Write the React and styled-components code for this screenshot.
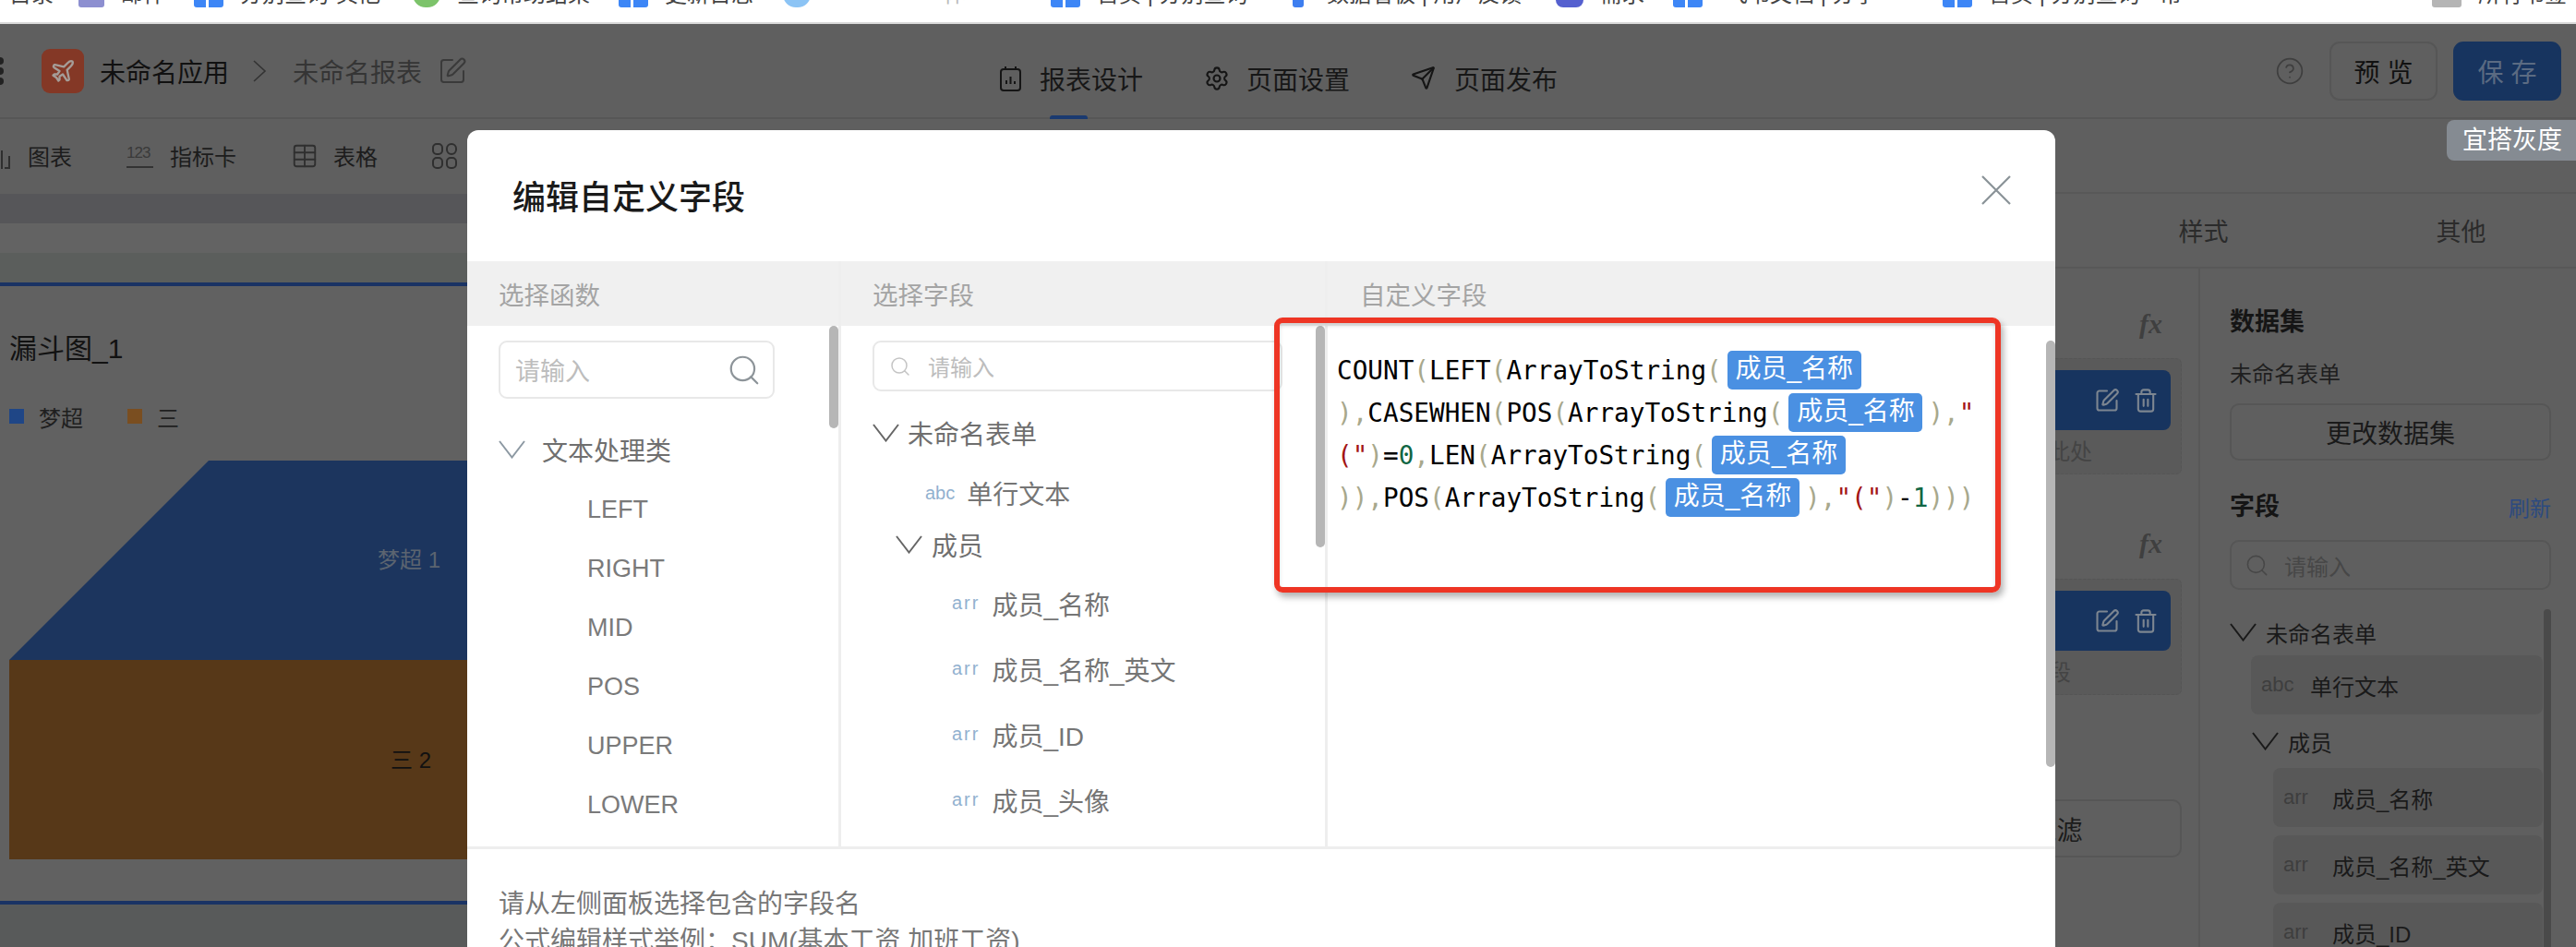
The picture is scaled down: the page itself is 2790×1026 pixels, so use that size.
import React from 'react';
import styled, { createGlobalStyle } from 'styled-components';
import { Plane, Settings, Send, SquarePen, Trash2, CircleHelp, Search, Table } from 'lucide-react';

const GlobalStyle = createGlobalStyle`
  html, body {
    margin: 0;
    padding: 0;
    background: #5f5f5f;
  }
  * {
    box-sizing: border-box;
  }
  body {
    font-family: "Liberation Sans", "Noto Sans CJK SC", sans-serif;
  }
`;

const Page = styled.div`
  position: relative;
  width: 2790px;
  height: 1026px;
  overflow: hidden;
  display: flex;
  flex-direction: column;
  background: #5f5f5f;
`;

/* bookmarks, cut off by the top of the photo */
const BookmarkBar = styled.div`
  height: 26px;
  flex: none;
  display: flex;
  background: #fff;
  border-bottom: 2px solid #d9d9d9;
  overflow: hidden;
`;

const Bookmark = styled.div`
  flex: none;
  width: ${p => p.$w}px;
  display: flex;
  gap: ${p => p.$gap || 18}px;
  height: 30px;
  margin-top: -21px;
  padding-left: ${p => p.$pad || 0}px;
  font-size: 24px;
  line-height: 29px;
  color: ${p => p.$faint ? '#bbb' : '#444'};
  white-space: nowrap;
  overflow: hidden;
`;

const Favicon = styled.span`
  flex: none;
  width: ${p => p.$w || 32}px;
  height: 29px;
  border-radius: 0 0 ${p => p.$round || 3}px ${p => p.$round || 3}px;
  background: ${p => p.$c};
  ${p => p.$split && 'background: linear-gradient(90deg, #3d86f6 0 40%, #fff 40% 50%, #3d86f6 50%);'}
`;

const Header = styled.div`
  height: 103px;
  flex: none;
  display: grid;
  grid-template-columns: 1083px auto 1fr;
  align-items: center;
  background: #5f5f5f;
  border-bottom: 2px solid #565656;
`;

const Brand = styled.div`
  display: flex;
  align-items: center;
  height: 100%;
`;

const Grip = styled.svg`
  width: 4px;
  height: 30px;
  fill: #222;
  margin: 0 41px 0 0;
`;

const Logo = styled.div`
  width: 46px;
  height: 48px;
  border-radius: 9px;
  background: #843826;
  color: #a59d98;
  display: flex;
  align-items: center;
  justify-content: center;
  margin-right: 17px;
`;

const AppName = styled.span`
  font-size: 28px;
  color: #111;
`;

const Crumb = styled.svg`
  width: 16px;
  height: 24px;
  margin: 0 28px 0 25px;
  fill: none;
  stroke: #333;
  stroke-width: 1.6;
`;

const ReportName = styled.span`
  font-size: 28px;
  color: #353535;
  margin-right: 17px;
`;

const EditIcon = styled(SquarePen)`
  color: ${p => p.$c || '#3a3a3a'};
`;

const HeadTabs = styled.div`
  display: flex;
  gap: 66px;
  height: 100%;
`;

const HeadTab = styled.div`
  position: relative;
  display: flex;
  align-items: center;
  gap: ${p => p.$gap || 20}px;
  font-size: 28px;
  color: #171717;
  padding-top: 16px;
  ${p => p.$active && `
    &::after {
      content: '';
      position: absolute;
      left: 54px;
      bottom: -2px;
      width: 41px;
      height: 4px;
      border-radius: 3px 3px 0 0;
      background: #1a3a70;
    }
  `}
`;

const HeadActions = styled.div`
  display: flex;
  align-items: center;
  justify-content: flex-end;
  padding-right: 16px;
`;

const HelpIcon = styled(CircleHelp)`
  color: #3f3f3f;
  margin-right: 27px;
`;

const ActionButton = styled.div`
  width: 117px;
  height: 64px;
  margin-left: ${p => p.$ml || 0}px;
  border-radius: 11px;
  display: flex;
  align-items: center;
  justify-content: center;
  font-size: 28px;
  white-space: pre;
  border: 2px solid ${p => p.$primary ? '#17345f' : '#565656'};
  background: ${p => p.$primary ? '#17345f' : 'transparent'};
  color: ${p => p.$primary ? '#5b6b82' : '#111'};
`;

const GrayTag = styled.div`
  position: absolute;
  right: 0;
  top: 130px;
  width: 140px;
  height: 44px;
  border-radius: 8px 0 0 8px;
  background: #858b92;
  color: #fff;
  font-size: 27px;
  line-height: 44px;
  padding-left: 17px;
  white-space: nowrap;
`;

const Body = styled.div`
  flex: 1;
  min-height: 0;
  display: flex;
`;

const Workspace = styled.div`
  width: 1968px;
  flex: none;
  display: flex;
  flex-direction: column;
`;

const Toolbar = styled.div`
  height: 81px;
  flex: none;
  display: flex;
  align-items: center;
  gap: 59px;
  padding-bottom: 2px;
`;

const ToolItem = styled.div`
  display: flex;
  align-items: center;
  gap: ${p => p.$gap || 18}px;
  font-size: 24px;
  color: #1c1c1c;
`;

const ToolSvg = styled.svg`
  width: ${p => p.$w}px;
  height: 28px;
  fill: none;
  stroke: #2f2f2f;
  stroke-width: 2;
`;

const NumberMark = styled.span`
  width: 29px;
  display: flex;
  flex-direction: column;
  font-size: 17px;
  line-height: 20px;
  color: #3a3a3a;
  border-bottom: 2px solid #333;
  padding-bottom: 4px;
  letter-spacing: -1px;
`;

const Band = styled.div`
  height: ${p => p.$h}px;
  flex: none;
  background: ${p => p.$bg};
`;

const Canvas = styled.div`
  flex: none;
  height: 666px;
  padding: 48px 0 0 10px;
  background: #616161;
`;

const ChartTitle = styled.div`
  font-size: 30px;
  line-height: 40px;
  color: #121212;
`;

const Legend = styled.div`
  display: flex;
  align-items: center;
  gap: 48px;
  margin-top: 40px;
  height: 26px;
`;

const LegendItem = styled.div`
  display: flex;
  align-items: center;
  gap: 16px;
  font-size: 24px;
  color: #1f1f1f;
`;

const Swatch = styled.span`
  width: 16px;
  height: 16px;
  background: ${p => p.$c};
`;

const Funnel = styled.svg`
  display: block;
  margin-top: 35px;
  width: 600px;
  height: 432px;
  font-size: 24px;
  text-anchor: middle;
`;

const Side = styled.div`
  flex: 1;
  min-width: 0;
  display: flex;
  flex-direction: column;
  padding-top: 79px;
`;

const SideTabs = styled.div`
  height: 83px;
  flex: none;
  display: grid;
  grid-template-columns: repeat(3, 279px);
  align-items: center;
  justify-items: center;
  border-top: 2px solid #585858;
  border-bottom: 2px solid #585858;
  font-size: 27px;
  color: #2b2b2b;
`;

const SideColumns = styled.div`
  flex: 1;
  min-height: 0;
  display: flex;
`;

const ConfigCol = styled.div`
  width: 415px;
  flex: none;
  padding: 46px 18px 0 22px;
  border-right: 2px solid #585858;
`;

const Fx = styled.div`
  font-family: "Liberation Serif", serif;
  font-style: italic;
  font-weight: 700;
  font-size: 30px;
  line-height: 27px;
  height: 27px;
  text-align: right;
  padding-right: 21px;
  margin: ${p => p.$mt || 0}px 0 ${p => p.$mb || 22}px;
  color: #3f3f3f;
`;

const DropBox = styled.div`
  height: 126px;
  padding: 12px 11px 0;
  background: #5a5a5a;
  border: 1px dashed #555;
  border-radius: 6px;
`;

const FieldChip = styled.div`
  height: 65px;
  border-radius: 8px;
  background: #17345f;
  display: flex;
  align-items: center;
  justify-content: flex-end;
  gap: 14px;
  padding-right: 13px;
  color: #7d8691;
`;

const DropHint = styled.div`
  margin-top: 9px;
  padding-right: ${p => p.$inset}px;
  text-align: right;
  font-size: 24px;
  line-height: 30px;
  color: #444;
  white-space: nowrap;
`;

const OutlineButton = styled.div`
  height: ${p => p.$h}px;
  margin-top: ${p => p.$mt || 0}px;
  padding-left: ${p => p.$padLeft || 0}px;
  border: 2px solid #565656;
  border-radius: 10px;
  display: flex;
  align-items: center;
  justify-content: center;
  font-size: 28px;
  color: #1a1a1a;
`;

const DataCol = styled.div`
  flex: 1;
  min-width: 0;
  padding: 40px 27px 0 32px;
`;

const SectionTitle = styled.div`
  font-size: 27px;
  line-height: 36px;
  font-weight: 700;
  color: #151515;
`;

const SourceName = styled.div`
  margin-top: 21px;
  font-size: 24px;
  line-height: 36px;
  color: #1f1f1f;
`;

const FieldHead = styled.div`
  display: flex;
  justify-content: space-between;
  align-items: center;
  margin-top: 32px;
  height: 36px;
`;

const RefreshLink = styled.span`
  font-size: 23px;
  color: #2c4a80;
`;

const SideSearch = styled.div`
  height: 54px;
  margin-top: 18px;
  border: 2px solid #565656;
  border-radius: 10px;
  display: flex;
  align-items: center;
  gap: 16px;
  padding-left: 14px;
  font-size: 24px;
  color: #474747;
`;

const SideTree = styled.div`
  position: relative;
  margin: 21px -27px 0 0;
  padding-right: 36px;
`;

const SideScroll = styled.div`
  position: absolute;
  top: 0;
  right: 27px;
  width: 8px;
  height: 400px;
  border-radius: 4px;
  background: #4a4a4a;
`;

const SideGroup = styled.div`
  display: flex;
  align-items: center;
  gap: 10px;
  height: ${p => p.$h}px;
  margin-left: ${p => p.$indent || 0}px;
  font-size: 24px;
  color: #1a1a1a;
`;

const SideRow = styled.div`
  display: flex;
  align-items: center;
  height: 64px;
  margin: 0 0 ${p => p.$mb || 0}px ${p => p.$indent}px;
  padding-left: 11px;
  border-radius: 8px;
  background: #585858;
  font-size: 24px;
  color: #1a1a1a;
`;

const SideType = styled.span`
  width: 53px;
  font-size: 22px;
  color: #3e3e3e;
`;

const Chevron = styled.svg`
  flex: none;
  width: ${p => p.$w || 29}px;
  height: 20px;
  fill: none;
  stroke: ${p => p.$c || '#1a1a1a'};
  stroke-width: 2;
`;

/* dialog */
const Modal = styled.div`
  position: absolute;
  left: 506px;
  top: 141px;
  width: 1720px;
  height: 960px;
  border-radius: 12px;
  background: #fff;
  overflow: hidden;
`;

const ModalHead = styled.div`
  height: 142px;
  display: flex;
  align-items: center;
  justify-content: space-between;
  padding: 0 48px 2px 49px;
  font-size: 36px;
  font-weight: 500;
  color: #1a1a1a;
`;

const CloseIcon = styled.svg`
  width: 32px;
  height: 32px;
  margin-top: -10px;
  fill: none;
  stroke: #8a9297;
  stroke-width: 2.2;
`;

const Columns = styled.div`
  display: grid;
  grid-template-columns: 405px 527px 1fr;
  height: 637px;
  border-bottom: 3px solid #eeeeee;
`;

const Column = styled.div`
  display: flex;
  flex-direction: column;
  min-width: 0;
  border-right: ${p => p.$last ? 0 : 3}px solid #eeeeee;
`;

const ColumnHead = styled.div`
  height: 70px;
  flex: none;
  display: flex;
  align-items: center;
  padding-left: ${p => p.$pad || 34}px;
  background: #f0f0f0;
  font-size: 27.5px;
  color: #a4a4a4;
`;

const ColumnBody = styled.div`
  position: relative;
  flex: 1;
  min-height: 0;
  overflow: hidden;
  padding: ${p => p.$flush ? '0' : '16px 0 0 34px'};
`;

const Thumb = styled.div`
  position: absolute;
  top: ${p => p.$top || 0}px;
  right: 0;
  width: 10px;
  height: ${p => p.$h}px;
  border-radius: 5px;
  background: #b6b6b6;
`;

const SearchBox = styled.div`
  width: ${p => p.$w}px;
  height: ${p => p.$h}px;
  display: flex;
  align-items: center;
  justify-content: ${p => p.$iconRight ? 'space-between' : 'flex-start'};
  gap: 18px;
  padding: 0 ${p => p.$iconRight ? 12 : 16}px 0 16px;
  border: 2px solid #e8e8e8;
  border-radius: 9px;
  color: #bdbdbd;
  font-size: ${p => p.$font}px;
`;

const Group = styled.div`
  display: flex;
  align-items: center;
  gap: ${p => p.$gap}px;
  height: ${p => p.$h}px;
  margin: ${p => p.$mt || 0}px 0 0 ${p => p.$indent || 0}px;
  font-size: 28px;
  color: #6f6f6f;
`;

const FuncItem = styled.div`
  height: 64px;
  line-height: 64px;
  padding-left: 96px;
  font-size: 27px;
  color: #7a7a7a;
`;

const Leaf = styled.div`
  display: flex;
  align-items: center;
  gap: 13px;
  height: ${p => p.$h}px;
  margin-top: ${p => p.$mt || 0}px;
  padding-left: ${p => p.$indent}px;
  font-size: 28px;
  color: #757575;
  white-space: nowrap;
`;

const TypeMark = styled.span`
  font-size: 20px;
  letter-spacing: ${p => p.$spread || 0}px;
  color: #92b1cf;
`;

const Code = styled.div`
  padding: 25px 0 0 10px;
  font-family: "DejaVu Sans Mono", "Liberation Mono", monospace;
  font-size: 27.7px;
`;

const CodeLine = styled.div`
  display: flex;
  align-items: center;
  height: 46px;
  white-space: pre;
`;

const Token = styled.span`
  color: ${p => ({ punc: '#a8a88c', str: '#a31515', num: '#116644' }[p.$kind] || '#000')};
`;

const FieldTag = styled.span`
  width: 145px;
  height: 42px;
  margin: 0 6px;
  flex: none;
  border-radius: 5px;
  background: #4a90e2;
  color: #fff;
  text-align: center;
  font-family: "Liberation Sans", "Noto Sans CJK SC", sans-serif;
  font-size: 28px;
  line-height: 40px;
`;

const ModalFoot = styled.div`
  padding: 40px 0 0 34px;
  font-size: 28px;
  line-height: 40px;
  color: #777;
  white-space: nowrap;
`;

const RedFrame = styled.div`
  position: absolute;
  left: 1380px;
  top: 344px;
  width: 787px;
  height: 298px;
  border: 6px solid #ee3524;
  border-radius: 9px;
  box-shadow: 3px 5px 7px rgba(0, 0, 0, 0.3), inset 0 3px 4px rgba(0, 0, 0, 0.15);
`;

const bookmarks = [
  { w: 85, pad: 10, label: '目录' },
  { w: 125, icon: '#8d8fd0', iw: 28, label: '邮件' },
  { w: 237, split: true, label: '分别查询-其他' },
  { w: 223, icon: '#7cc36a', iw: 30, round: 14, label: '查询帮助结果' },
  { w: 178, split: true, label: '更新日志' },
  { w: 290, icon: '#8cc4f5', iw: 30, round: 14, gap: 120, faint: true, label: '一体' },
  { w: 262, split: true, label: '首页 | 分别查询' },
  { w: 285, icon: '#3d7ef0', iw: 12, gap: 25, label: '数据看板 | 用户反馈' },
  { w: 127, icon: '#5560cf', iw: 30, round: 8, label: '需求' },
  { w: 292, split: true, gap: 25, label: '飞书文档 | 分享' },
  { w: 510, split: true, label: '首页 | 分别查询 · 帮' },
  { w: 176, pad: 20, icon: '#b5b5b5', iw: 32, label: '所有书签' },
];

const funcs = ['LEFT', 'RIGHT', 'MID', 'POS', 'UPPER', 'LOWER'];
const members = ['成员_名称', '成员_名称_英文', '成员_ID', '成员_头像'];

const F = 'fn';
const P = 'punc';
const codeLines = [
  [[F, 'COUNT'], [P, '('], [F, 'LEFT'], [P, '('], [F, 'ArrayToString'], [P, '('], ['tag']],
  [[P, '),'], [F, 'CASEWHEN'], [P, '('], [F, 'POS'], [P, '('], [F, 'ArrayToString'], [P, '('], ['tag'], [P, '),'], ['str', '"']],
  [['str', '("'], [P, ')'], [F, '='], ['num', '0'], [P, ','], [F, 'LEN'], [P, '('], [F, 'ArrayToString'], [P, '('], ['tag']],
  [[P, ')),'], [F, 'POS'], [P, '('], [F, 'ArrayToString'], [P, '('], ['tag'], [P, '),'], ['str', '"("'], [P, ')'], [F, '-'], ['num', '1'], [P, ')))']],
];

function Caret({ w, c }) {
  return (
    <Chevron $w={w} $c={c} viewBox="0 0 29 20">
      <path d="M1 1 L14.5 18.5 L28 1" />
    </Chevron>
  );
}

function ChipIcons() {
  return (
    <FieldChip>
      <SquarePen size={28} strokeWidth={1.8} />
      <Trash2 size={28} strokeWidth={1.8} />
    </FieldChip>
  );
}

export default function App() {
  return (
    <Page>
      <GlobalStyle />
      <BookmarkBar>
        {bookmarks.map((b, i) => (
          <Bookmark key={i} $w={b.w} $pad={b.pad} $gap={b.gap} $faint={b.faint}>
            {b.split && <Favicon $split />}
            {b.icon && <Favicon $c={b.icon} $w={b.iw} $round={b.round} />}
            <span>{b.label}</span>
          </Bookmark>
        ))}
      </BookmarkBar>

      <Header>
        <Brand>
          <Grip viewBox="0 0 4 30">
            <circle cx="0" cy="4" r="4" />
            <circle cx="0" cy="15" r="4" />
            <circle cx="0" cy="26" r="4" />
          </Grip>
          <Logo><Plane size={28} strokeWidth={2} /></Logo>
          <AppName>未命名应用</AppName>
          <Crumb viewBox="0 0 16 24"><path d="M2 1 L14 12 L2 23" /></Crumb>
          <ReportName>未命名报表</ReportName>
          <EditIcon size={32} strokeWidth={1.5} />
        </Brand>
        <HeadTabs>
          <HeadTab $active>
            <svg width="23" height="28" viewBox="0 0 23 28" fill="none" stroke="#151515" strokeWidth="2">
              <rect x="1" y="4" width="21" height="23" rx="3" />
              <path d="M6 1v4M17 1v4M7 20v-4M11.5 20v-8M16 20v-3" />
            </svg>
            报表设计
          </HeadTab>
          <HeadTab $gap={18}>
            <Settings size={28} strokeWidth={1.8} color="#151515" />
            页面设置
          </HeadTab>
          <HeadTab>
            <Send size={27} strokeWidth={1.9} color="#151515" />
            页面发布
          </HeadTab>
        </HeadTabs>
        <HeadActions>
          <HelpIcon size={32} strokeWidth={1.3} />
          <ActionButton>预 览</ActionButton>
          <ActionButton $primary $ml={17}>保 存</ActionButton>
        </HeadActions>
      </Header>

      <Body>
        <Workspace>
          <Toolbar>
            <ToolItem>
              <ToolSvg $w={12} viewBox="0 0 12 28">
                <path d="M2 8v20M10 14v13H5" />
              </ToolSvg>
              图表
            </ToolItem>
            <ToolItem>
              <NumberMark>123</NumberMark>
              指标卡
            </ToolItem>
            <ToolItem $gap={16}>
              <Table size={30} strokeWidth={1.5} color="#2f2f2f" />
              表格
            </ToolItem>
            <ToolItem>
              <ToolSvg $w={27} viewBox="0 0 27 28">
                <rect x="1" y="1" width="10" height="11" rx="4" />
                <rect x="16" y="1" width="10" height="11" rx="5" />
                <rect x="1" y="16" width="10" height="11" rx="4" />
                <rect x="16" y="16" width="10" height="11" rx="4" />
              </ToolSvg>
              容器
            </ToolItem>
          </Toolbar>
          <Band $h={32} $bg="#565659" />
          <Band $h={32} $bg="#636363" />
          <Band $h={32} $bg="#5b5e5c" />
          <Band $h={4} $bg="#1a3364" />
          <Canvas>
            <ChartTitle>漏斗图_1</ChartTitle>
            <Legend>
              <LegendItem><Swatch $c="#1f4686" />梦超</LegendItem>
              <LegendItem><Swatch $c="#7a4e20" />三</LegendItem>
            </Legend>
            <Funnel viewBox="0 0 600 432">
              <polygon points="216,0 600,0 600,216 0,216" fill="#1c355e" />
              <rect x="0" y="216" width="600" height="216" fill="#573818" />
              <text x="433" y="116" fill="#5b6470">梦超 1</text>
              <text x="435" y="333" fill="#111">三 2</text>
            </Funnel>
          </Canvas>
          <Band $h={4} $bg="#1a3364" />
          <Band $h={46} $bg="#585a5a" />
        </Workspace>

        <Side>
          <SideTabs>
            <span>数据</span>
            <span>样式</span>
            <span>其他</span>
          </SideTabs>
          <SideColumns>
            <ConfigCol>
              <Fx $mb={24}>fx</Fx>
              <DropBox>
                <ChipIcons />
                <DropHint $inset={85}>请拖入字段至此处</DropHint>
              </DropBox>
              <Fx $mt={61} $mb={25}>fx</Fx>
              <DropBox>
                <ChipIcons />
                <DropHint $inset={108}>拖入维度字段</DropHint>
              </DropBox>
              <OutlineButton $h={63} $mt={113} $padLeft={46}>添加过滤</OutlineButton>
            </ConfigCol>
            <DataCol>
              <SectionTitle>数据集</SectionTitle>
              <SourceName>未命名表单</SourceName>
              <OutlineButton $h={62} $mt={13}>更改数据集</OutlineButton>
              <FieldHead>
                <SectionTitle>字段</SectionTitle>
                <RefreshLink>刷新</RefreshLink>
              </FieldHead>
              <SideSearch>
                <Search size={27} strokeWidth={1.4} color="#474747" />
                请输入
              </SideSearch>
              <SideTree>
                <SideScroll />
                <SideGroup $h={50}><Caret />未命名表单</SideGroup>
                <SideRow $indent={23}><SideType>abc</SideType>单行文本</SideRow>
                <SideGroup $h={58} $indent={24}><Caret />成员</SideGroup>
                {members.slice(0, 3).map(m => (
                  <SideRow key={m} $indent={47} $mb={9}><SideType>arr</SideType>{m}</SideRow>
                ))}
              </SideTree>
            </DataCol>
          </SideColumns>
        </Side>
      </Body>

      <GrayTag>宜搭灰度</GrayTag>

      <Modal>
        <ModalHead>
          编辑自定义字段
          <CloseIcon viewBox="0 0 32 32"><path d="M1 1 L31 31 M31 1 L1 31" /></CloseIcon>
        </ModalHead>
        <Columns>
          <Column>
            <ColumnHead>选择函数</ColumnHead>
            <ColumnBody>
              <Thumb $h={111} />
              <SearchBox $w={299} $h={63} $font={27} $iconRight>
                请输入
                <Search size={38} strokeWidth={1.4} color="#8d9499" />
              </SearchBox>
              <Group $gap={18} $h={67} $mt={21}>
                <Caret c="#8d99a3" />
                文本处理类
              </Group>
              {funcs.map(f => <FuncItem key={f}>{f}</FuncItem>)}
            </ColumnBody>
          </Column>
          <Column>
            <ColumnHead>选择字段</ColumnHead>
            <ColumnBody>
              <Thumb $h={240} />
              <SearchBox $w={444} $h={55} $font={24}>
                <Search size={24} strokeWidth={1.5} color="#c4c4c4" />
                请输入
              </SearchBox>
              <Group $gap={9} $h={56} $mt={17}>
                <Caret c="#666" />
                未命名表单
              </Group>
              <Leaf $indent={57} $h={56} $mt={9}><TypeMark>abc</TypeMark>单行文本</Leaf>
              <Group $gap={10} $h={56} $indent={25}>
                <Caret c="#666" />
                成员
              </Group>
              {members.map(m => (
                <Leaf key={m} $indent={86} $h={71}><TypeMark $spread={2}>arr</TypeMark>{m}</Leaf>
              ))}
            </ColumnBody>
          </Column>
          <Column $last>
            <ColumnHead $pad={35}>自定义字段</ColumnHead>
            <ColumnBody $flush>
              <Thumb $top={16} $h={462} />
              <Code>
                {codeLines.map((line, i) => (
                  <CodeLine key={i}>
                    {line.map((t, j) => (
                      t[0] === 'tag'
                        ? <FieldTag key={j}>成员_名称</FieldTag>
                        : <Token key={j} $kind={t[0]}>{t[1]}</Token>
                    ))}
                  </CodeLine>
                ))}
              </Code>
            </ColumnBody>
          </Column>
        </Columns>
        <ModalFoot>
          <div>请从左侧面板选择包含的字段名</div>
          <div>公式编辑样式举例：SUM(基本工资,加班工资)</div>
        </ModalFoot>
      </Modal>

      <RedFrame />
    </Page>
  );
}
